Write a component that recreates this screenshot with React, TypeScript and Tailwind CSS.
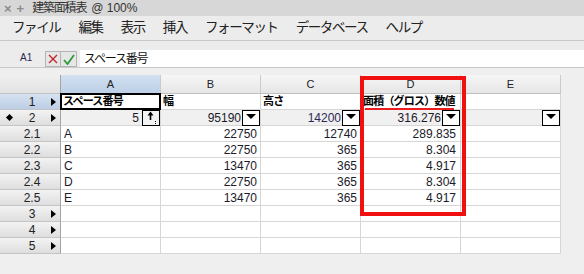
import React from "react";

const FONT = '"Liberation Sans", "Noto Sans CJK JP", sans-serif';

type Row = {
  label: string;
  tri?: boolean;
  diamond?: boolean;
  kind: "head" | "sum" | "data" | "empty";
  a?: string;
  b?: string;
  c?: string;
  d?: string;
};

const rows: Row[] = [
  { label: "1", tri: true, kind: "head" },
  { label: "2", tri: true, diamond: true, kind: "sum" },
  { label: "2.1", kind: "data", a: "A", b: "22750", c: "12740", d: "289.835" },
  { label: "2.2", kind: "data", a: "B", b: "22750", c: "365", d: "8.304" },
  { label: "2.3", kind: "data", a: "C", b: "13470", c: "365", d: "4.917" },
  { label: "2.4", kind: "data", a: "D", b: "22750", c: "365", d: "8.304" },
  { label: "2.5", kind: "data", a: "E", b: "13470", c: "365", d: "4.917" },
  { label: "3", tri: true, kind: "empty" },
  { label: "4", tri: true, kind: "empty" },
  { label: "5", tri: true, kind: "empty" },
];

function DropBox() {
  return (
    <div className="w-[18px] h-[16px] border border-black bg-white flex justify-center pt-[3px] shrink-0">
      <svg width="10" height="5" viewBox="0 0 10 5">
        <polygon points="0,0 10,0 5,5" fill="#000" />
      </svg>
    </div>
  );
}

function SortBox() {
  return (
    <div className="w-[18px] h-[16px] border border-black bg-[#f4f4f4] shrink-0 flex justify-center">
      <svg width="16" height="14" viewBox="0 0 16 14">
        <line x1="7.5" y1="2" x2="7.5" y2="9" stroke="#000" strokeWidth="1.6" />
        <polygon points="4.5,4.5 7.5,0.5 10.5,4.5" fill="#000" />
        <rect x="12" y="10" width="1" height="1" fill="#000" />
        <rect x="12" y="12" width="1" height="1" fill="#000" />
      </svg>
    </div>
  );
}

function RowHeader({ r }: { r: Row }) {
  const sel = r.kind === "head";
  return (
    <div
      className={
        "relative h-[16px] border-b border-r border-b-[#c4c4c4] border-r-[#a4a4a4] flex items-center " +
        (sel
          ? "bg-gradient-to-b from-[#d6e2f1] to-[#bccee5]"
          : "bg-gradient-to-b from-[#f3f3f3] to-[#dedede]")
      }
    >
      {r.diamond && (
        <div className="absolute left-[7px] top-[5px] w-[5px] h-[5px] bg-black rotate-45" />
      )}
      <div className="w-full text-center pl-[4px] text-[12px] leading-none text-[#222]">{r.label}</div>
      {r.tri && (
        <div className="absolute right-[4px] top-[4px] w-0 h-0 border-y-[4px] border-y-transparent border-l-[5px] border-l-black" />
      )}
    </div>
  );
}

const cellBase =
  "relative h-[16px] border-b border-r border-[#d6d6d6] flex items-center text-[12px] leading-none text-[#1a1a2a]";

function DataRow({ r }: { r: Row }) {
  if (r.kind === "head") {
    const head = "font-semibold text-[11px] tracking-[-0.8px] text-black pl-[2px]";
    return (
      <>
        <RowHeader r={r} />
        <div className={cellBase + " bg-white"}>
          <div className={head}>スペース番号</div>
          <div className="absolute inset-[-1px] border-2 border-black" />
        </div>
        <div className={cellBase + " bg-white"}>
          <div className={head}>幅</div>
        </div>
        <div className={cellBase + " bg-white"}>
          <div className={head}>高さ</div>
        </div>
        <div className={cellBase + " bg-white"}>
          <div className={head}>面積（グロス）数値</div>
          <div className="absolute left-[4px] right-[6px] bottom-[-1px] h-[2px] bg-[#ee1c1c]" />
        </div>
        <div className={cellBase + " bg-white"} />
        <div className="h-[16px]" />
      </>
    );
  }
  if (r.kind === "sum") {
    return (
      <>
        <RowHeader r={r} />
        <div className={cellBase + " bg-[#f0f0f0] justify-end"}>
          <span className="pr-[3px]">5</span>
          <SortBox />
        </div>
        <div className={cellBase + " bg-[#f0f0f0] justify-end"}>
          <span className="pr-[1px]">95190</span>
          <DropBox />
        </div>
        <div className={cellBase + " bg-[#f0f0f0] justify-end"}>
          <span className="pr-[1px] text-[#2a2a55]">14200</span>
          <DropBox />
        </div>
        <div className={cellBase + " bg-[#f0f0f0] justify-end"}>
          <span className="pr-[1px]">316.276</span>
          <DropBox />
        </div>
        <div className={cellBase + " bg-[#f0f0f0] justify-end"}>
          <DropBox />
        </div>
        <div className="h-[16px]" />
      </>
    );
  }
  return (
    <>
      <RowHeader r={r} />
      <div className={cellBase + " bg-white pl-[3px]"}>{r.a ?? ""}</div>
      <div className={cellBase + " bg-white justify-end pr-[3px]"}>{r.b ?? ""}</div>
      <div className={cellBase + " bg-white justify-end pr-[3px]"}>{r.c ?? ""}</div>
      <div className={cellBase + " bg-white justify-end pr-[4px]"}>{r.d ?? ""}</div>
      <div className={cellBase + " bg-white"} />
      <div className="h-[16px]" />
    </>
  );
}

export default function App() {
  const colHead =
    "h-[19px] border-b border-r border-b-[#c0c0c0] border-r-[#cacaca] flex items-center justify-center text-[11px] text-[#222]";
  return (
    <div
      className="relative w-[584px] h-[274px] overflow-hidden bg-[#efefef] flex flex-col"
      style={{ fontFamily: FONT }}
    >
      {/* title bar */}
      <div className="h-[16px] bg-[#d7d7d7] flex items-center text-[12px] text-[#333] leading-none">
        <span className="ml-[4px] text-[#8c8c8c] text-[13px] font-bold leading-none">×</span>
        <span className="ml-[5px] text-[#8c8c8c] text-[13px] font-bold leading-none">+</span>
        <span className="ml-[8px] tracking-[-1.2px]">建築面積表</span>
        <span className="ml-[5px]">@ 100%</span>
      </div>

      {/* menu bar */}
      <div className="h-[25px] bg-[#ececec] border-b border-[#c9c9c9] flex items-center pl-[12px] gap-[18px] text-[13.5px] tracking-[-1.4px] text-[#222]">
        <span>ファイル</span>
        <span>編集</span>
        <span>表示</span>
        <span>挿入</span>
        <span>フォーマット</span>
        <span>データベース</span>
        <span>ヘルプ</span>
      </div>

      {/* formula bar */}
      <div className="h-[27px] bg-[#ececec] border-b border-[#c9c9c9] flex items-end">
        <div className="w-[45px] pl-[20px] mb-[4px] text-[10px] leading-none text-[#2a2a50]">A1</div>
        <div className="flex mb-0">
          <div className="w-[16px] h-[16px] border border-[#b4b4b4] bg-[#e6e6e6] flex items-center justify-center">
            <svg width="10" height="10" viewBox="0 0 10 10">
              <path d="M1 1 L9 9 M9 1 L1 9" stroke="#c0282a" strokeWidth="1.4" />
            </svg>
          </div>
          <div className="w-[16px] h-[16px] border border-l-0 border-[#b4b4b4] bg-[#e6e6e6] flex items-center justify-center">
            <svg width="12" height="11" viewBox="0 0 12 11">
              <path d="M1 6 L4.5 10 L11 1" stroke="#2a9a3a" strokeWidth="1.8" fill="none" />
            </svg>
          </div>
        </div>
        <div className="ml-[3px] flex-1 h-[17px] bg-white flex items-center pl-[4px] text-[12px] tracking-[-1.2px] text-[#111]">
          スペース番号
        </div>
      </div>

      <div className="h-[7px]" />

      {/* grid */}
      <div className="grid grid-cols-[61px_100px_100px_100px_100px_100px_1fr]">
        <div className="h-[19px] border-b border-r border-b-[#c0c0c0] border-r-[#a4a4a4] bg-gradient-to-b from-[#f0f0f0] to-[#e2e2e2]" />
        <div className={colHead + " bg-gradient-to-b from-[#d2e0f1] to-[#bdd0e7]"}>A</div>
        <div className={colHead + " bg-gradient-to-b from-[#f6f6f6] to-[#e6e6e6]"}>B</div>
        <div className={colHead + " bg-gradient-to-b from-[#f6f6f6] to-[#e6e6e6]"}>C</div>
        <div className={colHead + " bg-gradient-to-b from-[#f6f6f6] to-[#e6e6e6]"}>D</div>
        <div className={colHead + " bg-gradient-to-b from-[#f6f6f6] to-[#e6e6e6]"}>E</div>
        <div className="h-[19px]" />
        {rows.map((r) => (
          <DataRow key={r.label} r={r} />
        ))}
      </div>

      {/* red highlight box (annotation overlay) */}
      <div className="absolute left-[360px] top-[76px] w-[106px] h-[140px] border-4 border-[#f01010]" />
    </div>
  );
}
